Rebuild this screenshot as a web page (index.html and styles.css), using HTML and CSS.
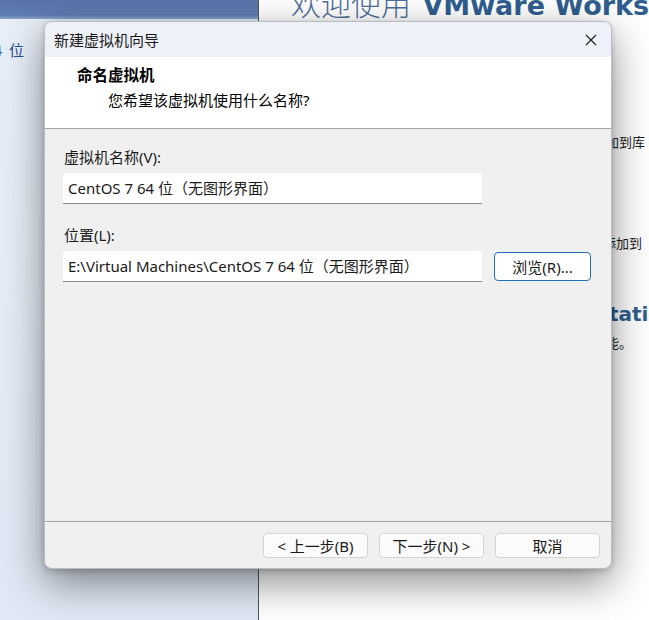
FILE: index.html
```html
<!DOCTYPE html>
<html lang="zh-CN">
<head>
<meta charset="utf-8">
<title>新建虚拟机向导</title>
<link rel="stylesheet" href="styles.css">
</head>
<body>
<div class="desktop">
  <aside class="side">
    <div class="side-head"></div>
    <div class="side-item">CentOS 7 64 位</div>
  </aside>
  <main class="home">
    <h1 class="home-title"><span class="zh">欢迎使用</span> VMware Workstation</h1>
    <p class="home-line l1">创建新的虚拟机或打开现有的虚拟机并将其添加到库</p>
    <p class="home-line l2">打开现有的虚拟机文件，然后将其添加到</p>
    <h2 class="home-sub">VMware Workstation</h2>
    <p class="home-line l3">使用更多虚拟化技术的强大功能。</p>
  </main>

  <section class="dialog">
    <header class="titlebar">
      <span class="title">新建虚拟机向导</span>
      <svg class="close" width="12" height="12" viewBox="0 0 12 12"><path d="M1 1 L11 11 M11 1 L1 11" stroke="#1b1b1b" stroke-width="1.1" fill="none"/></svg>
    </header>
    <div class="wiz-head">
      <div class="wiz-h1">命名虚拟机</div>
      <div class="wiz-h2">您希望该虚拟机使用什么名称?</div>
    </div>
    <div class="wiz-body">
      <label class="field-label">虚拟机名称(V):</label>
      <div class="input-row">
        <div class="input">CentOS 7 64 位（无图形界面）</div>
      </div>
      <label class="field-label second">位置(L):</label>
      <div class="input-row">
        <div class="input">E:\Virtual Machines\CentOS 7 64 位（无图形界面）</div>
        <button class="btn browse">浏览(R)...</button>
      </div>
    </div>
    <footer class="wiz-foot">
      <button class="btn">&lt; 上一步(B)</button>
      <button class="btn">下一步(N) &gt;</button>
      <button class="btn">取消</button>
    </footer>
  </section>
</div>
</body>
</html>
```

FILE: styles.css
```css
html, body {
  margin: 0;
  padding: 0;
}
body {
  width: 649px;
  height: 620px;
  overflow: hidden;
  font-family: "Noto Sans", "Noto Sans CJK SC", sans-serif;
  color: #1a1a1a;
}
.desktop {
  position: relative;
  display: flex;
  width: 649px;
  height: 620px;
  overflow: hidden;
  background: #ffffff;
}
.side {
  width: 258px;
  flex: none;
  border-right: 1px solid #4e5860;
  background: linear-gradient(180deg, #e8eff9 0%, #dfe8f4 100%);
  overflow: hidden;
}
.side-head {
  height: 19px;
  background: linear-gradient(180deg, #5873a8 0%, #5f7db3 80%, #8fa6cc 100%);
}
.side-item {
  margin: 19px 0 0 -90px;
  font-size: 15px;
  line-height: 24px;
  color: #1f4f86;
  white-space: nowrap;
  word-spacing: 3px;
}
.home {
  flex: 1;
  padding-left: 32px;
  overflow: hidden;
  white-space: nowrap;
}
.home-title {
  margin: -15px 0 0 0;
  font-family: "DejaVu Sans", "Noto Sans CJK SC", sans-serif;
  font-size: 27px;
  line-height: 34px;
  font-weight: bold;
  color: #2f5e8e;
}
.home-title .zh {
  font-family: "Noto Sans CJK SC", sans-serif;
  font-weight: 300;
  color: #4d6f9a;
  font-size: 30px;
  margin-right: 2px;
}
.home-line {
  margin: 0;
  font-family: "Noto Sans CJK SC", sans-serif;
  font-size: 13px;
  line-height: 18px;
  color: #222;
}
.l1 { margin-top: 110px; padding-left: 55px; }
.l2 { margin-top: 83px; padding-left: 117px; }
.home-sub {
  margin: 50px 0 0 0;
  font-family: "DejaVu Sans", sans-serif;
  font-size: 20px;
  line-height: 24px;
  font-weight: bold;
  color: #2f5e8e;
  padding-left: 150px;
}
.l3 { margin-top: 8px; padding-left: 146px; }

/* dialog window */
.dialog {
  position: absolute;
  left: 44px;
  top: 21px;
  width: 566px;
  height: 546px;
  border: 1px solid #b9bcc2;
  border-radius: 8px;
  background: #f0f0f0;
  box-shadow: 0 14px 40px rgba(0, 0, 0, 0.45), 0 2px 6px rgba(0, 0, 0, 0.18);
  display: flex;
  flex-direction: column;
  overflow: hidden;
}
.titlebar {
  height: 35px;
  flex: none;
  display: flex;
  align-items: center;
  justify-content: space-between;
  padding: 0 14px 0 9px;
  background: #eef1f8;
}
.title {
  font-size: 15px;
  color: #1a1a1a;
}
.close {
  display: block;
}
.wiz-head {
  flex: none;
  background: #ffffff;
  border-bottom: 1px solid #a3a3a3;
  padding-left: 32px;
  box-sizing: border-box;
  height: 72px;
}
.wiz-h1 {
  margin-top: 8px;
  font-size: 15.5px;
  line-height: 20px;
  font-weight: bold;
  color: #000;
}
.wiz-h2 {
  margin: 5px 0 0 31px;
  font-size: 15px;
  line-height: 20px;
  color: #000;
}
.wiz-body {
  flex: 1;
  padding: 18px 0 0 18px;
  display: flex;
  flex-direction: column;
}
.field-label {
  display: block;
  padding-left: 1px;
  font-size: 15px;
  line-height: 20px;
  color: #1a1a1a;
}
.field-label.second {
  margin-top: 21px;
}
.input-row {
  display: flex;
  align-items: center;
  gap: 12px;
  margin-top: 6px;
}
.input {
  width: 419px;
  height: 31px;
  box-sizing: border-box;
  background: #ffffff;
  border-bottom: 1px solid #8a8a8a;
  border-radius: 3px 3px 0 0;
  padding: 0 5px;
  font-size: 15px;
  line-height: 30px;
  color: #1a1a1a;
  white-space: nowrap;
  overflow: hidden;
}
.btn {
  width: 105px;
  height: 25px;
  box-sizing: border-box;
  background: #fbfbfb;
  border: 1px solid #d4d4d4;
  border-radius: 4px;
  font-family: "Noto Sans", "Noto Sans CJK SC", sans-serif;
  font-size: 15px;
  line-height: 20px;
  color: #1a1a1a;
  padding: 0;
}
.btn.browse {
  width: 97px;
  height: 29px;
  background: #ffffff;
  border: 1px solid #1f6fb8;
}
.wiz-foot {
  height: 47px;
  flex: none;
  border-top: 1px solid #a3a3a3;
  display: flex;
  justify-content: flex-end;
  align-items: flex-start;
  gap: 11px;
  padding: 11px 11px 0 0;
  box-sizing: border-box;
}
```
